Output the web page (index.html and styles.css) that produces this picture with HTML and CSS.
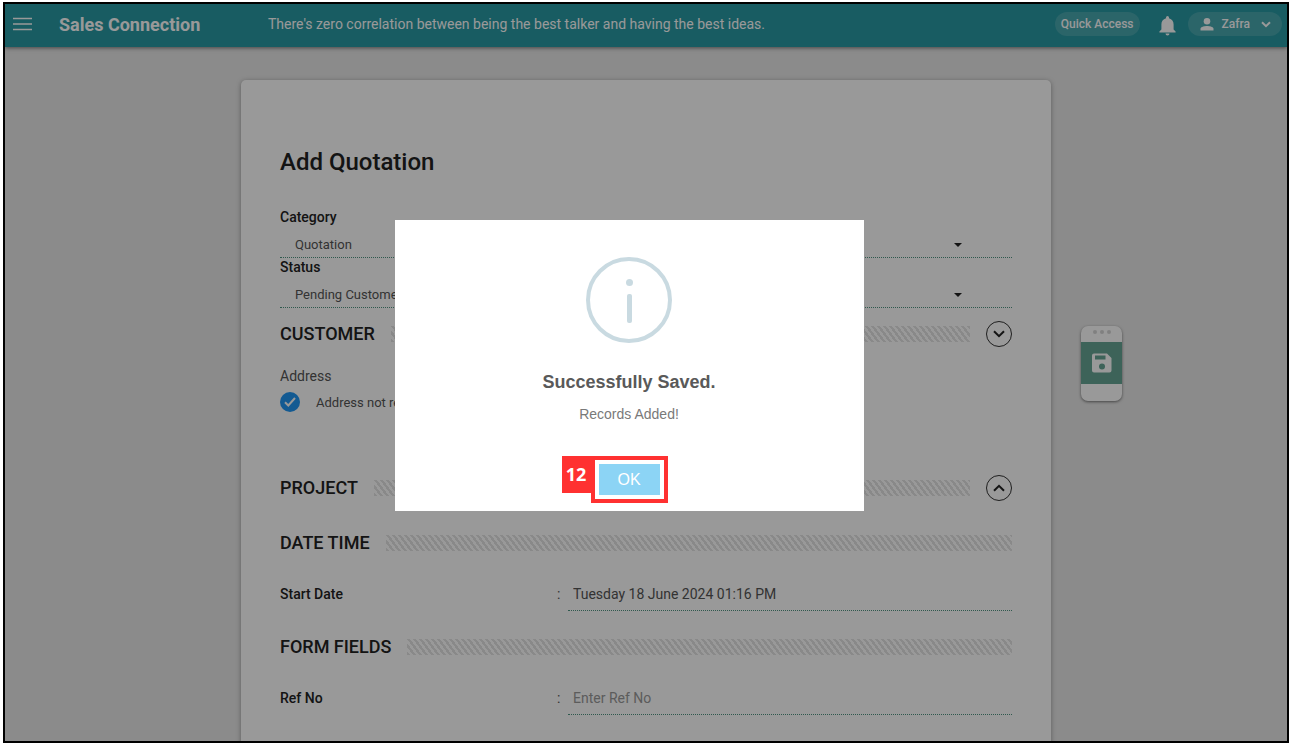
FILE: index.html
```html
<!DOCTYPE html>
<html lang="en">
<head>
<meta charset="utf-8">
<title>Add Quotation - Sales Connection</title>
<link rel="stylesheet" href="styles.css">
</head>
<body>
<div class="frame">
  <header class="topbar">
    <button class="icon-btn menu" type="button" aria-label="Menu">
      <svg width="19" height="14" viewBox="0 0 19 14"><path d="M0 1.5h19M0 7h19M0 12.5h19" stroke="currentColor" stroke-width="1.600"/></svg>
    </button>
    <a class="brand" href="#">Sales Connection</a>
    <p class="tagline">There's zero correlation between being the best talker and having the best ideas.</p>
    <button class="pill quick" type="button">Quick Access</button>
    <button class="icon-btn bell" type="button" aria-label="Notifications">
      <svg width="17" height="20" viewBox="0 0 17 20"><path d="M8.500 0a1.500 1.500 0 0 1 1.500 1.500v.7c3 .8 4.600 3.200 4.600 6.300v5l2 2v1H.4v-1l2-2v-5C2.400 5.400 4 3 7 2.200v-.7A1.500 1.500 0 0 1 8.500 0zM6.500 17.500h4a2 2 0 0 1-4 0z" fill="currentColor"/></svg>
    </button>
    <button class="pill user" type="button">
      <svg width="14" height="13" viewBox="0 0 14 13"><circle cx="7" cy="3.300" r="3.300" fill="currentColor"/><path d="M.5 12.500v-1.700C.5 8.800 4.500 8 7 8s6.500.8 6.500 2.800v1.700z" fill="currentColor"/></svg>
      <span>Zafra</span>
      <svg class="chev" width="10" height="7" viewBox="0 0 10 7"><path d="M1 1.200l4 4 4-4" fill="none" stroke="currentColor" stroke-width="2"/></svg>
    </button>
  </header>

  <div class="layout">
    <main class="card">
      <h1>Add Quotation</h1>

      <label class="label" for="category">Category</label>
      <div class="select">
        <select id="category"><option>Quotation</option></select>
        <svg width="8" height="4" viewBox="0 0 8 4"><path d="M0 0h8L4 4z" fill="currentColor"/></svg>
      </div>
      <label class="label" for="status">Status</label>
      <div class="select">
        <select id="status"><option>Pending Customer</option></select>
        <svg width="8" height="4" viewBox="0 0 8 4"><path d="M0 0h8L4 4z" fill="currentColor"/></svg>
      </div>

      <div class="section customer">
        <h2>CUSTOMER</h2><span class="stripes"></span>
        <button class="toggle" type="button" aria-label="Expand customer">
          <svg width="12" height="8" viewBox="0 0 12 8"><path d="M1 1.200l5 5 5-5" fill="none" stroke="currentColor" stroke-width="2"/></svg>
        </button>
      </div>
      <p class="address">Address</p>
      <label class="check">
        <input type="checkbox" checked>
        <svg width="12" height="10" viewBox="0 0 12 10"><path d="M1 5.200l3.300 3.300L11 1" fill="none" stroke="currentColor" stroke-width="2"/></svg>
        <span>Address not required</span>
      </label>

      <div class="section project">
        <h2>PROJECT</h2><span class="stripes"></span>
        <button class="toggle" type="button" aria-label="Collapse project">
          <svg width="12" height="8" viewBox="0 0 12 8"><path d="M1 6.800l5-5 5 5" fill="none" stroke="currentColor" stroke-width="2"/></svg>
        </button>
      </div>

      <div class="section date"><h2>DATE TIME</h2><span class="stripes"></span></div>
      <div class="row">
        <label for="start">Start Date</label><span>:</span>
        <input id="start" type="text" value="Tuesday 18 June 2024 01:16 PM">
      </div>

      <div class="section fields"><h2>FORM FIELDS</h2><span class="stripes"></span></div>
      <div class="row">
        <label for="ref">Ref No</label><span>:</span>
        <input id="ref" type="text" placeholder="Enter Ref No">
      </div>
    </main>

    <aside class="side">
      <button class="save" type="button" aria-label="Save">
        <span class="dots"><i></i><i></i><i></i></span>
        <span class="disk">
          <svg width="20" height="20" viewBox="0 0 20 20"><path fill-rule="evenodd" d="M2 .5h13l4.500 4.500v12.500a2 2 0 0 1-2 2H2a2 2 0 0 1-2-2v-15a2 2 0 0 1 2-2zM3 2.500v4h10.500v-4zM10 10.500a3 3 0 1 0 0 6 3 3 0 0 0 0-6z" fill="currentColor"/></svg>
        </span>
      </button>
    </aside>
  </div>

  <div class="overlay">
    <div class="modal" role="dialog" aria-labelledby="modal-title">
      <svg class="info" width="86" height="86" viewBox="0 0 86 86"><circle cx="43" cy="43" r="41" fill="none" stroke="#c9dae1" stroke-width="4"/><circle cx="43.500" cy="25.500" r="3.500" fill="#c9dae1"/><rect x="41" y="37" width="5" height="29" rx="2" fill="#c9dae1"/></svg>
      <h2 id="modal-title">Successfully Saved.</h2>
      <p>Records Added!</p>
      <div class="action">
        <button class="ok" type="button">OK</button>
        <span class="step">12</span>
      </div>
    </div>
  </div>
</div>
</body>
</html>
```
FILE: styles.css
```css
* {
  box-sizing: border-box;
}

body {
  margin: 0;
  height: 100vh;
  padding: 2px 2px 3px 3px;
  background: #fff;
  font-family: Roboto, sans-serif;
  font-size: 14px;
  color: #555;
}

h1, h2, p {
  margin: 0;
}

button, input, select {
  font: inherit;
  color: inherit;
  border: 0;
  padding: 0;
  background: none;
}

svg {
  display: block;
}

.frame {
  position: relative;
  height: 100%;
  overflow: hidden;
  border: 2px solid #000;
  background: #e8e8e8;
}

.topbar {
  position: relative;
  display: flex;
  align-items: center;
  height: 43px;
  padding: 0 5px 3px 8px;
  background: #2899a3;
  color: #fff;
  box-shadow: 0 1px 4px rgba(0, 0, 0, 0.5);
}

.menu {
  margin-right: 27px;
}

.brand {
  width: 209px;
  color: inherit;
  font-size: 18px;
  font-weight: 700;
  text-decoration: none;
}

.tagline {
  flex: 1;
}

.pill {
  display: flex;
  align-items: center;
  height: 24px;
  border-radius: 12px;
  background: rgba(255, 255, 255, 0.15);
  font-size: 12px;
  font-weight: 500;
}

.quick {
  padding: 0 6px;
  margin-right: 19px;
}

.bell {
  margin-right: 12px;
  padding-top: 4px;
}

.user {
  gap: 8px;
  padding: 0 11px 0 12px;
}

.chev {
  margin-left: 3px;
}

.layout {
  display: grid;
  grid-template-columns: 1fr minmax(0, 810px) 1fr;
  margin-top: 33px;
}

.card {
  grid-column: 2;
  min-height: 800px;
  padding: 68px 39px 40px;
  border-radius: 5px;
  background: #fff;
  box-shadow: 0 1px 5px rgba(0, 0, 0, 0.35);
}

h1 {
  margin-bottom: 32px;
  color: #222;
  font-size: 24px;
  font-weight: 500;
  line-height: 28px;
}

.label {
  display: block;
  color: #222;
  font-weight: 500;
  line-height: 18px;
}

.select {
  display: flex;
  align-items: center;
  height: 32px;
  padding: 6px 50px 0 15px;
  border-bottom: 1px dotted #4f9482;
  font-size: 13px;
}

.select select {
  flex: 1;
  appearance: none;
}

.select svg {
  color: #222;
}

.section {
  display: flex;
  align-items: center;
  gap: 16px;
  height: 26px;
}

.section h2 {
  padding-bottom: 2px;
  color: #222;
  font-size: 18px;
  font-weight: 500;
}

.stripes {
  flex: 1;
  height: 16px;
  background: linear-gradient(to top right, #e4e4e4 25%, #fff 25% 50%, #e4e4e4 50% 75%, #fff 75%) 0 0 / 6px 8px;
}

.toggle {
  display: grid;
  place-items: center;
  width: 26px;
  height: 26px;
  border: 1px solid #333;
  border-radius: 50%;
  color: #222;
}

.customer {
  margin-top: 13px;
}

.address {
  margin: 20px 0 7px;
  line-height: 18px;
}

.check {
  display: grid;
  grid-template-columns: 20px 1fr;
  align-items: center;
  column-gap: 16px;
  font-size: 13px;
}

.check input {
  grid-area: 1 / 1;
  appearance: none;
  width: 20px;
  height: 20px;
  margin: 0;
  border-radius: 50%;
  background: #2196f3;
}

.check svg {
  grid-area: 1 / 1;
  justify-self: center;
  color: #fff;
}

.project {
  margin-top: 63px;
}

.date {
  margin-top: 29px;
}

.row {
  display: grid;
  grid-template-columns: 277px 11px 1fr;
  align-items: start;
  margin-top: 29px;
  line-height: 18px;
}

.row label {
  color: #222;
  font-weight: 500;
}

.row input {
  height: 26px;
  padding: 0 5px 7px;
  border-bottom: 1px dotted #4f9482;
}

.row input::placeholder {
  color: #999;
}

.fields {
  margin-top: 23px;
}

.side {
  grid-column: 3;
  padding: 246px 0 0 30px;
}

.save {
  display: block;
  width: 41px;
  height: 75px;
  overflow: hidden;
  border-radius: 7px;
  background: #fff;
  box-shadow: 0 1px 3px rgba(0, 0, 0, 0.5);
}

.dots {
  display: flex;
  justify-content: center;
  gap: 3px;
  padding: 4px 0 8px;
}

.dots i {
  width: 4px;
  height: 4px;
  border-radius: 50%;
  background: #d6d6d6;
}

.disk {
  display: grid;
  place-items: center;
  height: 42px;
  margin-bottom: 17px;
  background: #66a594;
  color: #fff;
}

.overlay {
  position: absolute;
  inset: 0;
  display: flex;
  align-items: center;
  justify-content: center;
  padding: 0 34px 14px 0;
  background: rgba(0, 0, 0, 0.4);
}

.modal {
  display: flex;
  flex-direction: column;
  align-items: center;
  width: 469px;
  padding: 37px 20px 8px;
  background: #fff;
  font-family: "Liberation Sans", Arial, sans-serif;
}

.modal h2 {
  margin-top: 27px;
  color: #595959;
  font-size: 18px;
  line-height: 24px;
}

.modal p {
  margin: 10px 0 32px;
  color: #797979;
  line-height: 20px;
}

.action {
  position: relative;
  padding: 4px;
  border: 4px solid #ff3131;
}

.ok {
  display: block;
  width: 61px;
  height: 31px;
  background: #8cd4f5;
  color: #fff;
  font-size: 16px;
}

.step {
  position: absolute;
  top: -4px;
  right: 100%;
  width: 33px;
  padding-right: 4px;
  background: #ff3131;
  color: #fff;
  font-family: "Open Sans", sans-serif;
  font-size: 18px;
  font-weight: 700;
  line-height: 37px;
  text-align: center;
}
```
